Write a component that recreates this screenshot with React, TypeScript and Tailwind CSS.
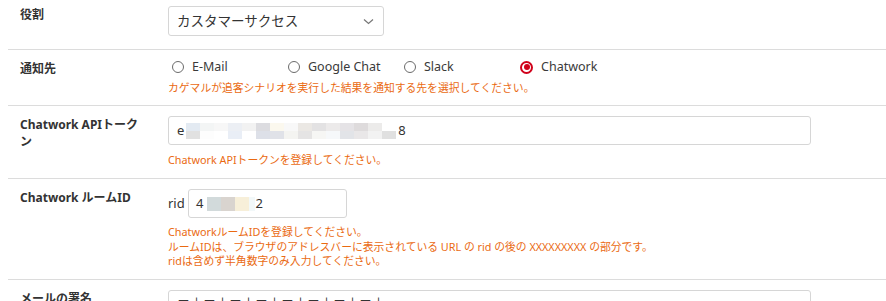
import React from "react";

const tokenRow1 = [
  "bg-[#e3eaf2]", "bg-[#f3f5f5]", "bg-[#f7f7f7]", "bg-[#eceff4]", "bg-[#f2f2f2]",
  "bg-[#dcdce0]", "bg-[#fbf8ee]", "bg-[#f8f8f8]", "bg-[#ebe8e4]", "bg-[#e3e2e3]",
  "bg-[#eceaea]", "bg-[#e5e3e6]", "bg-[#dedbdc]", "bg-[#ecebea]", "bg-[#ffffff]",
];
const tokenRow2 = [
  "bg-[#e1e1e1]", "bg-[#fdfdfd]", "bg-[#ffffff]", "bg-[#e9eef6]", "bg-[#ffffff]",
  "bg-[#dde0e8]", "bg-[#e0e2e8]", "bg-[#f4f4f1]", "bg-[#e5e4e4]", "bg-[#f6f6f4]",
  "bg-[#f6f8fa]", "bg-[#e2e4e8]", "bg-[#e9e7e8]", "bg-[#f2f2f2]", "bg-[#e0e0e0]",
];

function Radio({ label, checked }: { label: string; checked?: boolean }) {
  return (
    <div className="flex w-[116px] items-center">
      {checked ? (
        <span className="ml-[4px] flex h-[13px] w-[13px] items-center justify-center rounded-full border-[2px] border-[#d0021b]">
          <span className="h-[6px] w-[6px] rounded-full bg-[#d0021b]" />
        </span>
      ) : (
        <span className="ml-[4px] h-[12px] w-[12px] rounded-full border border-[#6b6b6b]" />
      )}
      <span className="ml-[8px] text-[12.5px] leading-[14px] text-[#3a3a3a]">{label}</span>
    </div>
  );
}

function Label({ children }: { children: React.ReactNode }) {
  return (
    <div className="w-[160px] shrink-0 pl-3 pr-6 text-[12px] font-bold leading-[17px] text-[#333]">
      {children}
    </div>
  );
}

export default function App() {
  return (
    <div className="h-[301px] w-[886px] overflow-hidden bg-white pl-2 font-['Noto_Sans','Noto_Sans_CJK_JP',sans-serif]">
      {/* 役割 */}
      <div className="flex pt-[6px] pb-[13px]">
        <Label>役割</Label>
        <div className="flex-1">
          <div className="flex h-[30px] w-[216px] items-center justify-between rounded-[3px] border border-[#d6d6d6] pl-[8px] pr-[9px]">
            <span className="text-[13.5px] text-[#333]">カスタマーサクセス</span>
            <svg width="11" height="7" viewBox="0 0 11 7" fill="none">
              <path d="M1 1.5 L5.5 5.5 L10 1.5" stroke="#777" strokeWidth="1.2" />
            </svg>
          </div>
        </div>
      </div>

      {/* 通知先 */}
      <div className="flex border-t border-[#dcdcdc] pt-[10px] pb-[10px]">
        <Label>通知先</Label>
        <div className="flex-1">
          <div className="flex h-[14px] items-center">
            <Radio label="E-Mail" />
            <Radio label="Google Chat" />
            <Radio label="Slack" />
            <Radio label="Chatwork" checked />
          </div>
          <div className="mt-[6px] text-[10.8px] leading-[15px] text-[#ea6a12]">
            カゲマルが追客シナリオを実行した結果を通知する先を選択してください。
          </div>
        </div>
      </div>

      {/* Chatwork APIトークン */}
      <div className="flex border-t border-[#dcdcdc] pt-[10px] pb-[11px]">
        <Label>Chatwork APIトークン</Label>
        <div className="flex-1">
          <div className="flex h-[29px] w-[643px] items-center rounded-[3px] border border-[#d6d6d6] pl-[8px]">
            <span className="text-[13px] text-[#333]">e</span>
            <div className="ml-[2px] flex flex-col">
              <div className="flex">
                {tokenRow1.map((c, i) => (
                  <span key={i} className={`h-[8px] w-[14px] ${c}`} />
                ))}
              </div>
              <div className="flex">
                {tokenRow2.map((c, i) => (
                  <span key={i} className={`h-[8px] w-[14px] ${c}`} />
                ))}
              </div>
            </div>
            <span className="ml-[2px] text-[13px] text-[#333]">8</span>
          </div>
          <div className="mt-[7px] text-[10.8px] leading-[15px] text-[#ea6a12]">
            Chatwork APIトークンを登録してください。
          </div>
        </div>
      </div>

      {/* Chatwork ルームID */}
      <div className="flex border-t border-[#dcdcdc] pt-[10px] pb-[10.5px]">
        <Label>Chatwork ルームID</Label>
        <div className="flex-1">
          <div className="flex items-center">
            <span className="w-[20px] text-[13px] text-[#333]">rid</span>
            <div className="flex h-[29px] w-[159px] items-center rounded-[3px] border border-[#d6d6d6] pl-[7px]">
              <span className="text-[13px] text-[#333]">4</span>
              <span className="ml-[4px] h-[14px] w-[14px] bg-[#d2dadb]" />
              <span className="h-[14px] w-[14px] bg-[#d9d4cf]" />
              <span className="h-[14px] w-[14px] bg-[#f7efd9]" />
              <span className="h-[14px] w-[6px] bg-[#f2f8f9]" />
              <span className="text-[13px] text-[#333]">2</span>
            </div>
          </div>
          <div className="mt-[7px] text-[10.8px] leading-[14.5px] text-[#ea6a12]">
            <div>ChatworkルームIDを登録してください。</div>
            <div>ルームIDは、ブラウザのアドレスバーに表示されている URL の rid の後の XXXXXXXXX の部分です。</div>
            <div>ridは含めず半角数字のみ入力してください。</div>
          </div>
        </div>
      </div>

      {/* メールの署名 */}
      <div className="flex border-t border-[#dcdcdc] pt-[10px] pb-[10px]">
        <Label>メールの署名</Label>
        <div className="flex-1">
          <div className="h-[60px] w-[643px] rounded-[3px] border border-[#d6d6d6] pl-[8px] pt-[3px] text-[13px] leading-[17px] text-[#333]">
            ＝＋＝＋＝＋＝＋＝＋＝＋＝＋＝＋
          </div>
        </div>
      </div>
    </div>
  );
}
